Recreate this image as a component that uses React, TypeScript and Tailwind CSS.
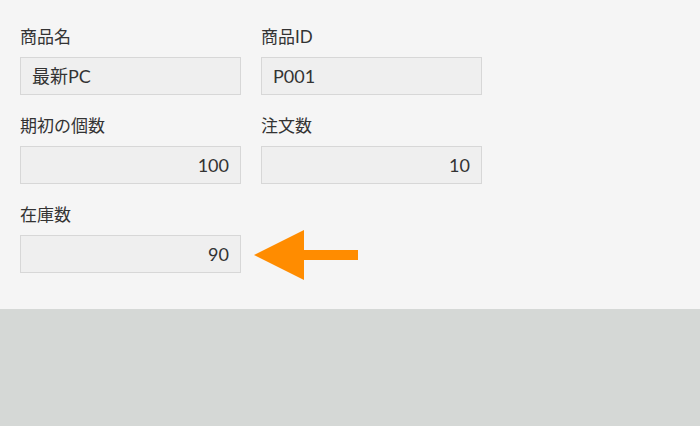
const font = { fontFamily: 'Lato, "Noto Sans CJK JP", "Noto Sans", sans-serif' };

function Field({ label, value, align = 'left' }: { label: string; value: string; align?: 'left' | 'right' }) {
  return (
    <div className="flex flex-col">
      <label className="h-[20px] mb-[10px] text-[17px] leading-[20px] text-[#333]">{label}</label>
      <div
        className={`w-[221px] h-[38px] flex items-center px-[11px] bg-[#efefef] border border-[#d7d7d7] text-[18px] text-[#333] ${
          align === 'right' ? 'justify-end' : 'justify-start'
        }`}
      >
        {value}
      </div>
    </div>
  );
}

export default function App() {
  return (
    <div className="w-[700px] h-[426px] bg-[#d5d8d6]" style={font}>
      <div className="h-[309px] bg-[#f5f5f5] pl-[20px] pt-[27px] flex flex-col gap-y-[21px]">
        <div className="flex gap-x-[20px]">
          <Field label="商品名" value="最新PC" />
          <Field label="商品ID" value="P001" />
        </div>
        <div className="flex gap-x-[20px]">
          <Field label="期初の個数" value="100" align="right" />
          <Field label="注文数" value="10" align="right" />
        </div>
        <div className="flex items-end">
          <Field label="在庫数" value="90" align="right" />
          {/* arrow */}
          <svg width="104" height="50" viewBox="0 0 104 50" className="ml-[13px] mb-[-7px]">
            <path d="M0 25 L50 0 L50 20 L104 20 L104 30 L50 30 L50 50 Z" fill="#ff8c00" />
          </svg>
        </div>
      </div>
    </div>
  );
}
